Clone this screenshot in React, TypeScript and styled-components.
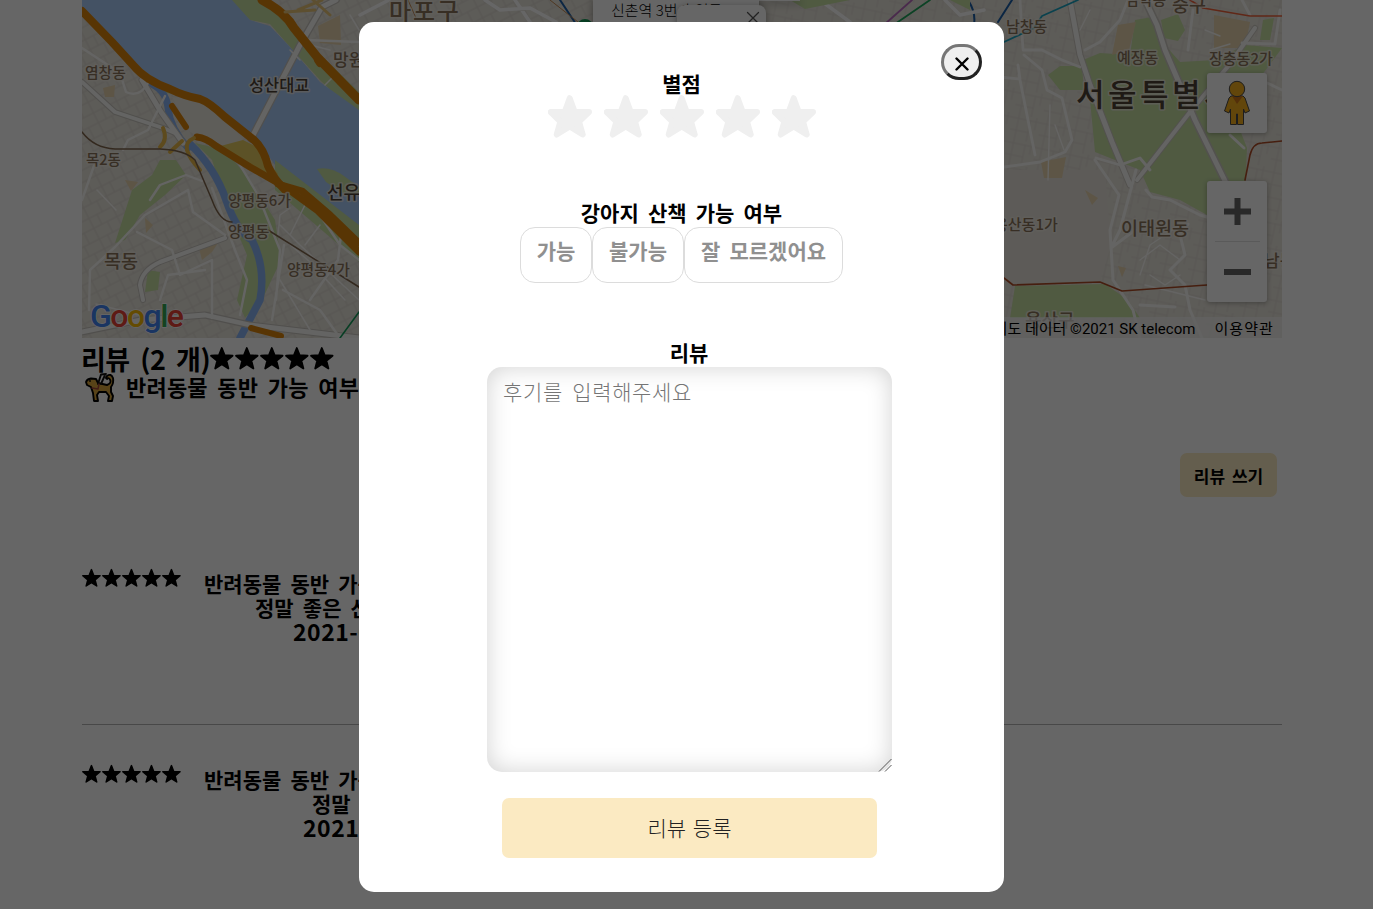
import React from "react";
import styled, { createGlobalStyle } from "styled-components";

const GlobalStyle = createGlobalStyle`
  * { box-sizing: border-box; }
  body {
    margin: 0;
    background: #fff;
    overflow: hidden;
    font-family: "Noto Sans CJK KR", "Noto Sans", sans-serif;
    color: #000;
  }
`;

const Page = styled.main`
  width: 1200px;
  height: 909px;
  margin-left: 82px;
  display: flex;
  flex-direction: column;
`;

const MapFrame = styled.section`
  position: relative;
  height: 338px;
  flex: none;
  overflow: hidden;
  background: #e9e5dc;
`;

const MapDrawing = styled.svg`
  display: block;
  width: 1200px;
  height: 338px;
`;

const MapControl = styled.div<{ $top: number; $height: number }>`
  position: absolute;
  right: 15px;
  top: ${(p) => p.$top}px;
  width: 60px;
  height: ${(p) => p.$height}px;
  border-radius: 3px;
  background: #fff;
  box-shadow: 0 1px 5px rgba(0, 0, 0, 0.3);
  display: flex;
  flex-direction: column;
  align-items: center;
  justify-content: center;
`;

const ZoomDivider = styled.i`
  width: 45px;
  height: 1px;
  background: #e0e0e0;
`;

const ZoomKey = styled.div`
  height: 60px;
  display: flex;
  align-items: center;
`;

const MapCredits = styled.div`
  position: absolute;
  right: 0;
  bottom: 0;
  height: 21px;
  padding-right: 9px;
  display: flex;
  align-items: center;
  gap: 19px;
  background: rgba(245, 245, 245, 0.7);
  font: 15px Roboto, "Noto Sans CJK KR", sans-serif;
  white-space: nowrap;
`;

const Terms = styled.span`
  letter-spacing: 1.1px;
  margin-right: -1px;
`;

const Bubble = styled.div<{ $left: number; $width: number; $height: number }>`
  position: absolute;
  top: 0;
  left: ${(p) => p.$left}px;
  width: ${(p) => p.$width}px;
  height: ${(p) => p.$height}px;
  background: #fff;
  box-shadow: 0 2px 7px 1px rgba(0, 0, 0, 0.3);
  padding-left: 18px;
  font-size: 15px;
  font-weight: 300;
  line-height: 20px;
  white-space: nowrap;
`;

const FrontBubble = styled(Bubble)`
  top: 5px;
  border-radius: 8px;
  padding: 6px 6px;
  display: flex;
  justify-content: flex-end;
`;

const Summary = styled.h2`
  height: 36px;
  margin: 0;
  padding-top: 5px;
  display: flex;
  align-items: center;
  font-size: 27px;
  font-weight: 700;
  line-height: 36px;
  word-spacing: 5px;
  letter-spacing: -0.5px;
  text-indent: -1px;
`;

const Heading = styled.h3`
  margin: 0;
  font-size: 21px;
  font-weight: 700;
  line-height: 24px;
  word-spacing: 4.4px;
  white-space: nowrap;
`;

const PetLine = styled.div`
  height: 28px;
  padding-left: 2px;
  display: flex;
  align-items: center;
  gap: 10px;

  ${Heading} {
    padding-bottom: 4px;
    font-size: 22px;
    letter-spacing: 0.2px;
  }
`;

const WriteRow = styled.div`
  height: 95px;
  padding-right: 5px;
  display: flex;
  justify-content: flex-end;
  align-items: flex-end;
`;

const WriteButton = styled.button`
  width: 97px;
  height: 44px;
  border: 0;
  padding: 1px 0 0;
  border-radius: 7px;
  background: #fbeac2;
  color: #000;
  font: 700 17px "Noto Sans CJK KR", sans-serif;
  word-spacing: 3px;
`;

const Review = styled.article<{ $ruled?: boolean }>`
  height: ${(p) => (p.$ruled ? 157 : 120)}px;
  display: flex;
  gap: 22px;
  border-bottom: ${(p) => (p.$ruled ? "1px solid #b4b4b4" : "0")};
`;

const Reviews = styled.section`
  padding-top: 71px;
  display: flex;
  flex-direction: column;
  gap: 39px;
`;

const Stars = styled.div<{ $gap?: number }>`
  display: flex;
  gap: ${(p) => p.$gap || 0}px;
`;

const ReviewLines = styled.div`
  padding-top: 3px;
`;

const ReviewLine = styled(Heading)<{ $indent?: number }>`
  padding-left: ${(p) => p.$indent || 0}px;
`;

const DateLine = styled(ReviewLine)`
  font-size: 23px;
  letter-spacing: 0.5px;
`;

const Backdrop = styled.div`
  position: fixed;
  inset: 0;
  background: rgba(0, 0, 0, 0.6);
`;

const Modal = styled.section`
  position: fixed;
  left: 359px;
  top: 22px;
  width: 645px;
  height: 870px;
  border-radius: 15px;
  background: #fff;
  display: flex;
  flex-direction: column;
  align-items: center;
`;

const CloseRow = styled.div`
  width: 100%;
  height: 49px;
  padding: 22px 22px 0 0;
  display: flex;
  justify-content: flex-end;
`;

const CloseButton = styled.button`
  width: 41px;
  height: 36px;
  padding: 4px 0 0;
  border: 3px solid;
  border-color: #767676 #212121 #212121 #767676;
  border-radius: 20px;
  background: #efefef;
  display: flex;
  align-items: center;
  justify-content: center;
`;

const Field = styled.div<{ $height: number; $left?: number }>`
  height: ${(p) => p.$height}px;
  padding-left: ${(p) => p.$left || 0}px;
  flex: none;
  display: flex;
  flex-direction: column;
  align-items: center;
`;

const Choices = styled.div`
  margin-top: 3px;
  display: flex;
`;

const Choice = styled.button<{ $width: number }>`
  width: ${(p) => p.$width}px;
  height: 56px;
  padding: 0 0 10px;
  border: 1px solid #dcdcdc;
  border-radius: 15px;
  background: #fff;
  color: #909090;
  font: 700 21px "Noto Sans CJK KR", sans-serif;
  word-spacing: 4.4px;
  white-space: nowrap;
`;

const InputWrap = styled.div`
  position: relative;
  width: 405px;
  height: 405px;
  flex: none;
  margin-left: 16px;
`;

const ReviewInput = styled.textarea`
  display: block;
  width: 100%;
  height: 100%;
  padding: 9px 16px;
  border: 0;
  border-radius: 15px;
  outline: 0;
  background: #fff;
  box-shadow: inset 0 0 25px rgba(0, 0, 0, 0.18);
  font: 300 21px/30px "Noto Sans CJK KR", sans-serif;
  letter-spacing: 0.65px;
  word-spacing: 4px;
  resize: none;
  &::placeholder { color: #757575; opacity: 1; }
`;

const Grip = styled.svg`
  position: absolute;
  right: 0;
  bottom: 0;
`;

const Submit = styled.button`
  width: 375px;
  height: 60px;
  flex: none;
  margin: 26px 0 0 16px;
  padding: 0 0 2px;
  border: 0;
  border-radius: 7px;
  background: #fbeac2;
  color: #222;
  font: 300 21px "Noto Sans CJK KR", sans-serif;
  word-spacing: 2px;
`;

const SmallStar = ({ size }: { size: number }) => (
  <svg width={size} height={size} viewBox="1 0 25 25">
    <path
      d="M12.8 2 15.6 9.2 23.6 9.7 17.4 14.8 19.4 22.5 12.8 18.3 6.2 22.5 8.2 14.8 2 9.7 10 9.2Z"
      stroke="#000"
      strokeWidth="1.8"
      strokeLinejoin="round"
    />
  </svg>
);

const RatingStar = () => (
  <svg width="44" height="43" viewBox="0 0 44 43" fill="#efefef">
    <path
      d="M21.7 3.2 26.7 17H41L31 26.5 34.7 39.5 21.7 31.5 8.7 39.5 12.4 26.5 2.7 17H16.7Z"
      stroke="#efefef"
      strokeWidth="6"
      strokeLinejoin="round"
    />
  </svg>
);

const five = [0, 1, 2, 3, 4];

const Dog = () => (
  <svg width="32" height="30" viewBox="0 0 32 30" strokeLinejoin="round" strokeLinecap="round">
    <path
      d="M2 9Q3 6 7 5.5L12 6 14 10 23 12Q28 10 26 6.5 24 4 23 6 21 5 23 3 27 0 29 5 30 10 27 14L27 19 29 23 28 28H24L25 23 22 19H15L13 22 14 28H10L9 20 7 14 3 12Z"
      fill="#dca83d"
      stroke="#000"
      strokeWidth="1.9"
    />
    <path d="M14 11 17 1.5 22 1M17 11 21 2" fill="none" stroke="#111" strokeWidth="1.9" />
    <path d="M8 15 14 16 15 11" fill="none" stroke="#a5463b" strokeWidth="1.5" />
    <circle cx="6" cy="8" r=".9" />
  </svg>
);

const Pegman = () => (
  <svg width="28" height="46" viewBox="0 0 28 46" stroke="#4a4a4a" strokeWidth="1">
    <path d="M8 16H20L22 18 26.5 31 22 33 20.5 29V44.5H14.5V34H13.5V44.5H7.5V29L6 33 1.500 31 6 18Z" fill="#f5ae1c" />
    <path d="m9 16 5 8 6-8Z" fill="#cf7517" stroke="none" />
    <circle cx="14" cy="9" r="7.700" fill="#f5ae1c" />
  </svg>
);

type Place = { x: number; y: number; size: number; text: string; dark?: boolean; spacing?: number };

const places: Place[] = [
  { x: 85, y: 78, size: 14.8, text: "염창동" },
  { x: 249, y: 91, size: 16.4, text: "성산대교", dark: true },
  { x: 333, y: 66, size: 17, text: "망원" },
  { x: 86, y: 165, size: 14.5, text: "목2동" },
  { x: 327, y: 199, size: 18, text: "선유", dark: true },
  { x: 228, y: 206, size: 14.8, text: "양평동6가" },
  { x: 228, y: 237, size: 15, text: "양평동" },
  { x: 287, y: 275, size: 14.8, text: "양평동4가" },
  { x: 104, y: 268, size: 18.5, text: "목동" },
  { x: 389, y: 20, size: 24, text: "마포구", spacing: 1.8 },
  { x: 1006, y: 32, size: 15, text: "남창동" },
  { x: 1126, y: 5, size: 14.5, text: "남학동" },
  { x: 1172, y: 12, size: 18.5, text: "중구" },
  { x: 1117, y: 63, size: 15, text: "예장동" },
  { x: 1209, y: 64, size: 15, text: "장충동2가" },
  { x: 1076, y: 106, size: 31, text: "서울특별시", dark: true, spacing: 3.5 },
  { x: 994, y: 230, size: 15, text: "용산동1가" },
  { x: 1121, y: 235, size: 18.5, text: "이태원동" },
  { x: 1264, y: 267, size: 17, text: "남동" },
  { x: 1025, y: 327, size: 18, text: "용산구" },
];

const logo: [string, string][] = [
  ["G", "#4285f4"],
  ["o", "#ea4335"],
  ["o", "#fbbc05"],
  ["g", "#4285f4"],
  ["l", "#34a853"],
  ["e", "#ea4335"],
];

const CityMap = () => (
  <MapDrawing viewBox="82 0 1200 338" fill="none" strokeLinecap="round" strokeLinejoin="round">
    <defs>
      <pattern id="blocks" width="26" height="23" patternUnits="userSpaceOnUse" patternTransform="rotate(-27)">
        <path d="M0 5H26M0 16H26M6 0V23M15 5V16M21 0V5M21 16V23" stroke="#dad6ce" strokeWidth="1" />
      </pattern>
      <pattern id="blocks2" width="29" height="25" patternUnits="userSpaceOnUse" patternTransform="rotate(12)">
        <path d="M0 4H29M0 16H18M6 0V25M18 4V25M24 0V12" stroke="#ddd9d1" strokeWidth="1" />
      </pattern>
    </defs>
    <rect x="82" width="510" height="338" fill="url(#blocks)" />
    <rect x="592" width="690" height="338" fill="url(#blocks2)" />
    <path d="M1004 170H1105L1111 245 1100 282 1013 285 1004 278Z" fill="#e8e4dc" />

    <g fill="#c7e0a4">
      <path d="M132 190 152 175 160 160 176 160 186 175 165 195 140 215 125 240 115 243Z" />
      <path d="M228 0H262L300 35 359 92V118L320 80 290 47 270 24 250 20Z" />
      <path d="M195 143 212 160 230 215 247 255 237 300 245 318 262 300 281 260 275 220 250 180 225 150Z" />
      <path d="M148 270 160 272 158 290 145 292Z" />
      <path d="M154 75 180 82 210 100 160 92Z" />
      <path d="M1083 60 1100 53 1130 55 1135 20 1152 17 1165 45 1180 62 1215 60 1245 45 1282 48 1262 75 1240 130 1247 148 1244 215 1207 215 1180 200 1150 192 1140 170 1095 152 1090 100Z" />
      <path d="M1048 75 1060 66 1082 66 1084 90 1060 90Z" />
      <path d="M1161 20 1178 14 1185 30 1178 41 1164 38Z" />
      <path d="M1263 20 1274 18 1270 40 1260 40Z" />
      <path d="M1015 286 1105 284 1128 300 1140 318 1010 318Z" />
    </g>
    <g fill="#e9d5ae">
      <path d="M318 26 340 15 341 45 320 43Z" />
      <path d="M1112 55 1118 25 1136 22 1129 50Z" />
      <path d="M1214 15 1250 22 1245 48 1214 48Z" />
      <path d="M1041 162 1066 157 1062 178 1044 178Z" />
      <path d="M103 88 115 85 114 97 105 97ZM125 180 138 182 131 191ZM145 218 153 225 146 233ZM199 248 220 240 212 252 202 260ZM1085 190 1098 198 1092 205ZM1118 266 1126 268 1122 277Z" />
    </g>

    <path d="M82 0H232L250 20 270 26 290 47 320 82 359 110V232L313 190 275 165 262 147 235 125 205 101 165 86 130 60 82 10Z" fill="#aaccf9" />
    <path d="M275 160 359 225V262L275 190Z" fill="#c7e0a4" />
    <path d="M317 169Q330 166 344 176L359 187V205L326 182Z" fill="#c7e0a4" />
    <path d="M318 190 359 195V222Z" fill="#aaccf9" />
    <path d="M146 82Q166 88 168 108T188 148" stroke="#8bb5f4" strokeWidth="7" />
    <path d="M190 144Q215 168 226 200T252 240Q266 268 260 300L240 338" stroke="#8bb5f4" strokeWidth="7.5" />
    <path d="M172 97 205 101 232 125 245 143 225 146 190 132Z" fill="#ece8df" />
    <path d="M213 148 243 140 257 147 278 174 272 183Z" fill="#e6ce62" />

    <g stroke="#c9c6c0">
      <path d="M82 82 115 112 163 128 175 133" strokeWidth="6" />
      <path d="M142 80 161 112 183 143" strokeWidth="7" />
      <path d="M251 139 300 45 322 7 336 0" strokeWidth="7.5" />
      <path d="M82 332 140 320 205 315 250 325 359 338" strokeWidth="7" />
      <path d="M143 300 140 285Q142 270 160 262L225 238" strokeWidth="6" />
    </g>
    <g stroke="#fbfaf7">
      <path d="M82 82 115 112 163 128 175 133" strokeWidth="3.8" />
      <path d="M142 80 161 112 183 143" strokeWidth="5" />
      <path d="M251 139 300 45 322 7 336 0" strokeWidth="5" />
      <path d="M82 332 140 320 205 315 250 325 359 338" strokeWidth="4.8" />
      <path d="M143 300 140 285Q142 270 160 262L225 238" strokeWidth="4" />
      <path d="M82 48 120 73 126 92Q140 98 148 83M123 150 128 140 148 130 165 96M82 200 96 160M188 190 145 215 115 247 90 270 89 310M188 190 193 212 225 235M137 232 172 250 180 275 212 260 212 318M205 270 168 275 160 300M212 188 235 250 247 280 240 315M240 165 258 195 280 250 276 300M290 190 320 215 340 245 359 260M284 245 272 320M283 290 320 310 340 338M310 300 338 260 341 235 359 250M306 40 359 42M150 200 160 185 186 175 202 181" strokeWidth="2.4" />
      <path d="M285 240 310 262 345 300M280 225 300 245 359 300M280 280 310 330M300 60 290 50M310 45 330 50M350 15 359 30M96 304 150 318M97 190 116 210M325 85 333 77M290 208 280 215 278 235M305 205 290 235M320 225 305 245" strokeWidth="1.5" />
    </g>

    <g stroke="#dd850b">
      <path d="M82 11 112 42 133 65Q145 80 170 89 184 96 200 99 209 102 225 117L254 140Q264 149 268 166 273 178 285 190" strokeWidth="8" />
      <path d="M262 0Q285 12 294 28L318 58 359 100" strokeWidth="9" />
      <path d="M318 60 320 63" strokeWidth="8" />
      <path d="M172 106 186 127" strokeWidth="6" />
      <path d="M197 137Q206 138 216 146L250 167 285 187 318 211 359 252" strokeWidth="7" />
      <path d="M278 184 302 191 330 215 359 243" strokeWidth="7" />
      <path d="M251 328 281 336" strokeWidth="6" />
    </g>
    <path d="M163 128Q168 140 160 147M182 141 170 152M194 138Q185 142 187 150T200 170" stroke="#e8b94a" strokeWidth="4" />
    <path d="M298 10 322 0M285 12 315 10M313 0 330 15" stroke="#e9c578" strokeWidth="3" />
    <path d="M82 132Q94 148 115 149H160Q185 150 195 160L212 200Q220 222 232 222M268 230 359 287" stroke="#80664d" strokeWidth="1.5" />
    <path d="M340 338 359 312" stroke="#159c5b" strokeWidth="1.6" />

    <g stroke="#cecac3">
      <path d="M1070 0 1080 55 1090 85 1112 142 1130 185" strokeWidth="7" />
      <path d="M1145 0 1157 25 1165 50 1195 120 1232 195" strokeWidth="8" />
      <path d="M1137 180 1190 112 1230 64 1255 28" strokeWidth="6" />
    </g>
    <g stroke="#fbfaf7">
      <path d="M1070 0 1080 55 1090 85 1112 142 1130 185" strokeWidth="5" />
      <path d="M1145 0 1157 25 1165 50 1195 120 1232 195" strokeWidth="5" />
      <path d="M1137 180 1190 112 1230 64 1255 28" strokeWidth="4" />
      <path d="M1085 50 1100 42 1120 20 1128 0M1023 50 1042 50 1062 60 1080 67M1024 55 1042 70 1047 90 1062 98 1072 140 1065 152 1040 162 1004 167M1019 75 1035 155M1000 77 1020 79 1018 65M1020 0 1023 50M1096 158 1120 165 1140 158 1150 170M1149 0 1159 5M1193 10 1188 50M1242 43 1275 44 1280 10M1242 0 1250 15M1250 75 1282 90M1230 135 1244 148" strokeWidth="2.8" />
      <path d="M1095 160 1119 195 1110 230 1113 280 1133 310 1140 338M1136 170 1120 230 1111 248 1135 230M1146 190 1152 197 1170 200 1200 215 1207 217M1188 224 1180 235 1185 255 1170 270 1185 285 1190 310 1202 338M1140 305 1175 307M1140 325 1170 340" strokeWidth="3" />
      <path d="M1050 105 1048 180M1055 125 1064 150M1090 10 1080 30M1180 225 1150 245 1140 275M1140 260 1160 245 1180 260M1150 275 1165 285 1180 275M1145 285 1205 300M1205 30 1220 36M1210 50 1230 44" strokeWidth="1.4" />
    </g>
    <path d="M1004 278 1013 285 1100 282 1122 291 1207 285M1245 180 1250 155Q1253 143 1262 143L1282 141" stroke="#ae4d26" strokeWidth="1.6" />
    <path d="M1190 0 1203 8 1250 16 1282 16" stroke="#ef623a" strokeWidth="1.6" />
    <path d="M1004 42 1034 28 1042 16 1078 0" stroke="#1ba5c3" strokeWidth="1.8" />
    <path d="M998 22 1012 0M560 0 576 24M968 0Q976 12 974 25" stroke="#1c5fa8" strokeWidth="2" />
    <path d="M885 24 912 0" stroke="#b86bbf" strokeWidth="1.8" />
    <path d="M895 24 930 0" stroke="#20a65c" strokeWidth="1.8" />
    <path d="M485 0 500 10 530 8 556 22M515 0 530 22M360 15 389 0M820 0 850 22M945 0 960 15 984 10" stroke="#fff" strokeWidth="3.5" />
    <path d="M790 0 805 9 850 0ZM950 0H970V10Z" fill="#c7e0a4" />
    <path d="M408 0 416 18M550 0 578 22" stroke="#c48b55" strokeWidth="1" />
    <circle cx="585" cy="27" r="8" fill="#139b56" />

    <g fontFamily='"Noto Sans CJK KR", sans-serif' strokeWidth="3" paintOrder="stroke" fontWeight="500">
      {places.map((p) => (
        <text
          key={p.text}
          x={p.x}
          y={p.y}
          fontSize={p.size}
          letterSpacing={p.spacing || 0}
          fill={p.dark ? "#4f4335" : "#8a735a"}
          stroke="#f2eee5"
          strokeOpacity=".75"
        >
          {p.text}
        </text>
      ))}
    </g>
    <text x="90" y="327" fontFamily="Roboto, sans-serif" fontSize="32" fontWeight="500" stroke="#fff" strokeWidth="1.5" paintOrder="stroke" textLength="94">
      {logo.map(([letter, color], i) => (
        <tspan key={i} fill={color}>{letter}</tspan>
      ))}
    </text>
  </MapDrawing>
);

const Cross = ({ size, width, color }: { size: number; width: number; color: string }) => (
  <svg width={size} height={size} viewBox="0 0 14 14" stroke={color} strokeWidth={width} strokeLinecap="round">
    <path d="m1.5 1.5 11 11m0-11-11 11" />
  </svg>
);

export default function App() {
  return (
    <>
      <GlobalStyle />
      <Page>
        <MapFrame>
          <CityMap />
          <Bubble $left={630} $width={88} $height={1} />
          <Bubble $left={511} $width={166} $height={40}>신촌역 3번 출입구</Bubble>
          <FrontBubble $left={595} $width={89} $height={40}>
            <Cross size={14} width={1.3} color="#555" />
          </FrontBubble>
          <MapControl $top={73} $height={60}><Pegman /></MapControl>
          <MapControl $top={181} $height={121}>
            <ZoomKey>
              <svg width="27" height="27" stroke="#666" strokeWidth="6"><path d="M0 13.5H27M13.5 0V27" /></svg>
            </ZoomKey>
            <ZoomDivider />
            <ZoomKey>
              <svg width="27" height="6"><path d="M0 0H27V6H0Z" fill="#666" /></svg>
            </ZoomKey>
          </MapControl>
          <MapCredits>
            <span>지도 데이터 ©2021 SK telecom</span>
            <Terms>이용약관</Terms>
          </MapCredits>
        </MapFrame>
        <Summary>
          리뷰 (2 개)
          <Stars>{five.map((i) => <SmallStar key={i} size={25} />)}</Stars>
        </Summary>
        <PetLine>
          <Dog />
          <Heading>반려동물 동반 가능 여부</Heading>
        </PetLine>
        <WriteRow><WriteButton>리뷰 쓰기</WriteButton></WriteRow>
        <Reviews>
          <Review $ruled>
            <Stars>{five.map((i) => <SmallStar key={i} size={20} />)}</Stars>
            <ReviewLines>
              <ReviewLine>반려동물 동반 가능</ReviewLine>
              <ReviewLine $indent={51}>정말 좋은 산책</ReviewLine>
              <DateLine $indent={89}>2021-0</DateLine>
            </ReviewLines>
          </Review>
          <Review>
            <Stars>{five.map((i) => <SmallStar key={i} size={20} />)}</Stars>
            <ReviewLines>
              <ReviewLine>반려동물 동반 가능</ReviewLine>
              <ReviewLine $indent={108}>정말</ReviewLine>
              <DateLine $indent={99}>2021-</DateLine>
            </ReviewLines>
          </Review>
        </Reviews>
      </Page>
      <Backdrop />
      <Modal>
        <CloseRow>
          <CloseButton aria-label="close"><Cross size={14} width={2.4} color="#000" /></CloseButton>
        </CloseRow>
        <Field $height={129}>
          <Heading>별점</Heading>
          <Stars $gap={12}>{five.map((i) => <RatingStar key={i} />)}</Stars>
        </Field>
        <Field $height={140}>
          <Heading>강아지 산책 가능 여부</Heading>
          <Choices>
            <Choice $width={72}>가능</Choice>
            <Choice $width={92}>불가능</Choice>
            <Choice $width={159}>잘 모르겠어요</Choice>
          </Choices>
        </Field>
        <Field $height={27} $left={15}>
          <Heading>리뷰</Heading>
        </Field>
        <InputWrap>
          <ReviewInput placeholder="후기를 입력해주세요" />
          <Grip width="14" height="14" stroke="#555" strokeWidth="1">
            <path d="M1 13.500 13.500 1M7 13.500 13.500 7" />
          </Grip>
        </InputWrap>
        <Submit>리뷰 등록</Submit>
      </Modal>
    </>
  );
}
